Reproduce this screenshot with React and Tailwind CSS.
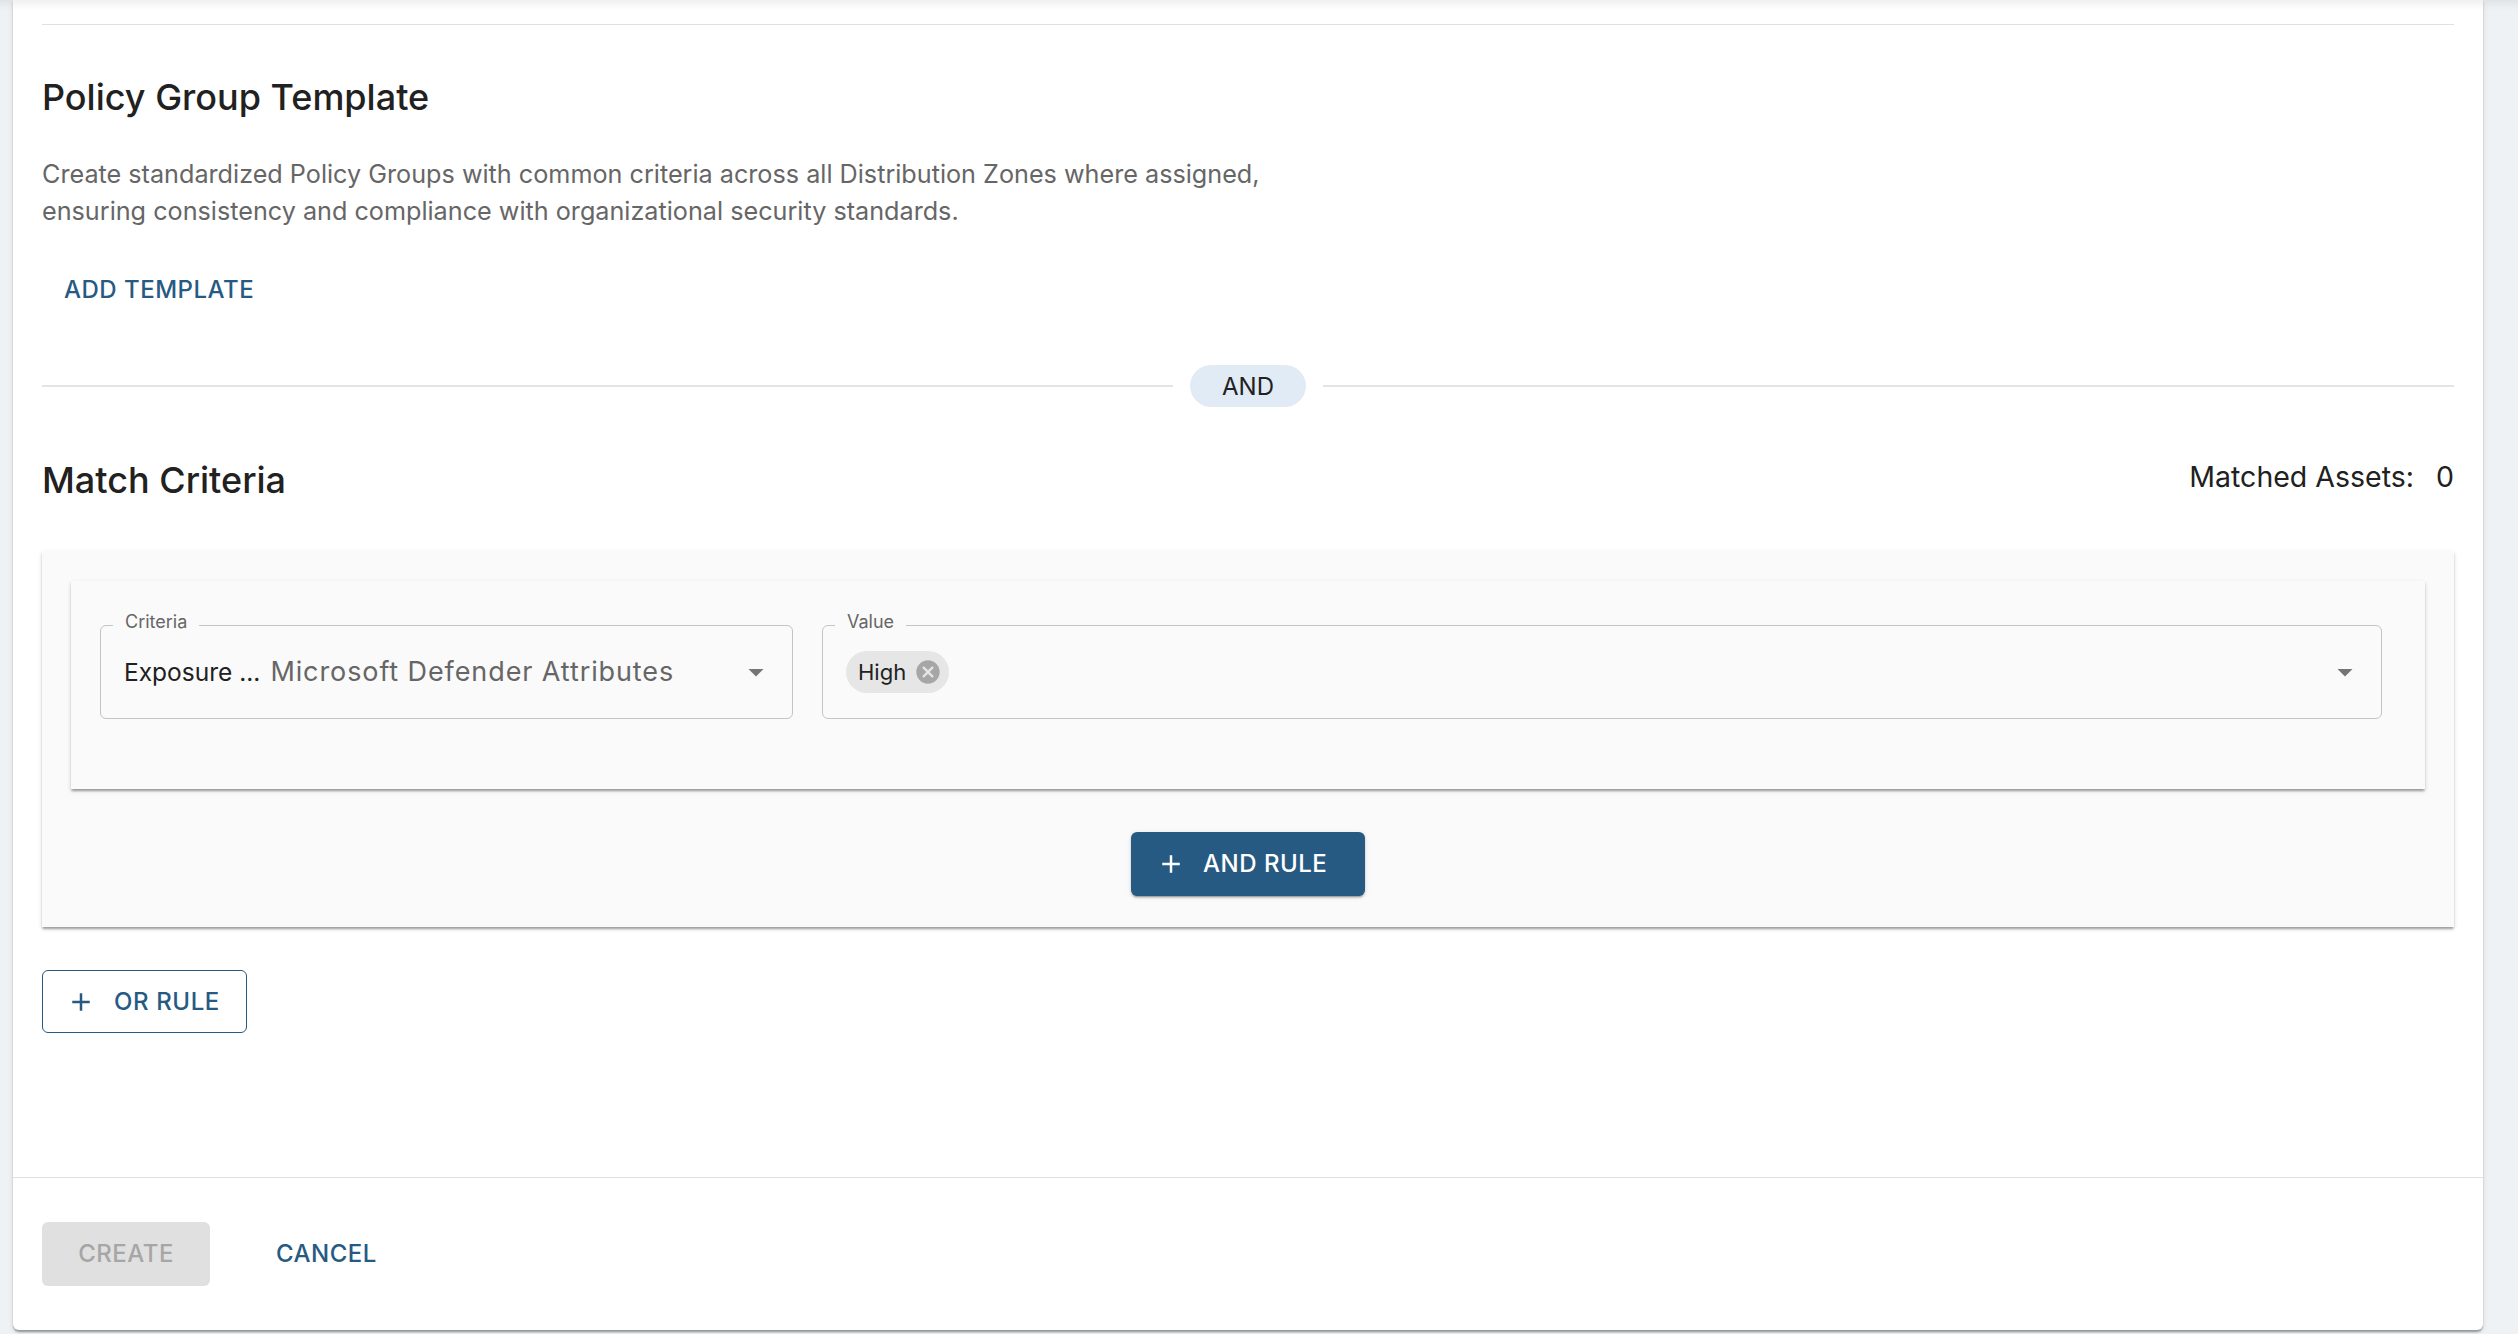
import React from "react";

const BLUE = "#275a82";

function ArrowDrop() {
  return (
    <svg width="36" height="36" viewBox="0 0 24 24" className="shrink-0">
      <path d="M7 10l5 5 5-5z" fill="#757575" />
    </svg>
  );
}

function PlusIcon({ color }) {
  return (
    <svg width="30" height="30" viewBox="0 0 24 24" className="shrink-0">
      <path d="M19 13h-6v6h-2v-6H5v-2h6V5h2v6h6v2z" fill={color} />
    </svg>
  );
}

function CancelIcon() {
  return (
    <svg width="28" height="28" viewBox="0 0 24 24" className="shrink-0">
      <path
        d="M12 2C6.47 2 2 6.47 2 12s4.47 10 10 10 10-4.47 10-10S17.53 2 12 2zm5 13.59L15.59 17 12 13.41 8.41 17 7 15.59 10.59 12 7 8.41 8.41 7 12 10.59 15.59 7 17 8.41 13.41 12 17 15.59z"
        fill="#a6a6a6"
      />
    </svg>
  );
}

function OutlinedField({ label, className, children }) {
  return (
    <div className={`relative h-[94px] rounded-[6px] border border-[#c4c4c4] ${className}`}>
      <span className="absolute left-[12px] top-[-15px] bg-[#fafafa] px-[12px] text-[18px] leading-[22px] text-[#666666]">
        {label}
      </span>
      {children}
    </div>
  );
}

export default function App() {
  return (
    <div className="relative h-[1334px] w-full overflow-hidden bg-[#eef2f5] font-['Inter','Noto_Sans',sans-serif] text-[#212121]">
      <div className="ml-[13px] w-[2470px] rounded-b-[6px] bg-white shadow-[0_3px_2px_-1px_rgba(0,0,0,0.2),0_2px_2px_0_rgba(0,0,0,0.14),0_2px_5px_0_rgba(0,0,0,0.12)]">
        <div className="px-[29px] pb-[144px]">
          <div className="h-[25px] border-b border-[#e0e0e0]" />

          {/* Template section */}
          <h2 className="mt-[48px] text-[36px] font-medium leading-[48px]">Policy Group Template</h2>
          <p className="mt-[35px] text-[25.2px] leading-[36.5px] text-[#666666]">
            Create standardized Policy Groups with common criteria across all Distribution Zones where assigned,
            <br />
            ensuring consistency and compliance with organizational security standards.
          </p>
          <button className="mt-[30px] flex h-[61px] items-center rounded-[6px] px-[22px] text-[24px] font-medium tracking-[0.5px] text-[#275a82]">
            ADD TEMPLATE
          </button>

          {/* AND separator */}
          <div className="mt-[45px] flex items-center">
            <div className="h-[2px] flex-1 bg-[#e4e4e4]" />
            <div className="mx-[17px] flex h-[42px] w-[116px] items-center justify-center rounded-full bg-[#e1ebf5] pt-[1px] text-[24px]">
              AND
            </div>
            <div className="h-[2px] flex-1 bg-[#e4e4e4]" />
          </div>

          {/* Match criteria header */}
          <div className="mt-[49px] flex items-start justify-between">
            <h2 className="text-[36px] font-medium leading-[48px]">Match Criteria</h2>
            <div className="flex text-[28.5px] leading-[41px]">
              <span>Matched Assets:</span>
              <span className="ml-[22px]">0</span>
            </div>
          </div>

          {/* Rule group */}
          <div className="mt-[47px] bg-[#fafafa] px-[29px] pb-[31px] pt-[30px] shadow-[0_3px_2px_-1px_rgba(0,0,0,0.2),0_2px_2px_0_rgba(0,0,0,0.14),0_2px_5px_0_rgba(0,0,0,0.12)]">
            <div className="flex gap-[29px] bg-[#fafafa] pb-[70px] pl-[29px] pr-[43px] pt-[44px] shadow-[0_3px_2px_-1px_rgba(0,0,0,0.2),0_2px_2px_0_rgba(0,0,0,0.14),0_2px_5px_0_rgba(0,0,0,0.12)]">
              <OutlinedField label="Criteria" className="w-[693px] shrink-0">
                <div className="flex h-full items-center pl-[23px] pr-[18px]">
                  <div className="flex flex-1 items-center truncate whitespace-nowrap">
                    <span className="text-[24.5px]">Exposure ...</span>
                    <span className="ml-[10px] text-[27px] tracking-[0.9px] text-[#666666]">Microsoft Defender Attributes</span>
                  </div>
                  <ArrowDrop />
                </div>
              </OutlinedField>
              <OutlinedField label="Value" className="flex-1">
                <div className="flex h-full items-center pl-[23px] pr-[18px]">
                  <div className="flex-1">
                    <span className="inline-flex h-[42px] items-center gap-[8px] rounded-full bg-[#e6e6e6] pl-[12px] pr-[7px] text-[22px]">
                      High
                      <CancelIcon />
                    </span>
                  </div>
                  <ArrowDrop />
                </div>
              </OutlinedField>
            </div>

            <div className="mt-[43px] flex justify-center">
              <button className="flex h-[64px] w-[234px] items-center gap-[17px] rounded-[6px] bg-[#275a82] pl-[25px] text-[24px] font-medium tracking-[0.5px] text-white shadow-[0_3px_1px_-2px_rgba(0,0,0,0.2),0_2px_2px_0_rgba(0,0,0,0.14),0_1px_5px_0_rgba(0,0,0,0.12)]">
                <PlusIcon color="#ffffff" />
                AND RULE
              </button>
            </div>
          </div>

          <button className="mt-[43px] flex h-[63px] w-[205px] items-center gap-[18px] rounded-[6px] border border-[#275a82] pl-[23px] text-[24px] font-medium tracking-[0.6px] text-[#275a82]">
            <PlusIcon color={BLUE} />
            OR RULE
          </button>
        </div>

        {/* Footer actions */}
        <div className="flex items-center border-t border-[#e0e0e0] px-[29px] pb-[44px] pt-[44px]">
          <button className="flex h-[64px] w-[168px] items-center justify-center rounded-[6px] bg-[#e0e0e0] text-[24px] font-medium tracking-[0.5px] text-[#a6a6a6]">
            CREATE
          </button>
          <button className="ml-[66px] text-[24px] font-medium tracking-[0.5px] text-[#275a82]">CANCEL</button>
        </div>
      </div>

      <div className="pointer-events-none absolute inset-x-0 top-0 h-[10px] bg-gradient-to-b from-[rgba(0,0,0,0.06)] to-transparent" />
    </div>
  );
}
